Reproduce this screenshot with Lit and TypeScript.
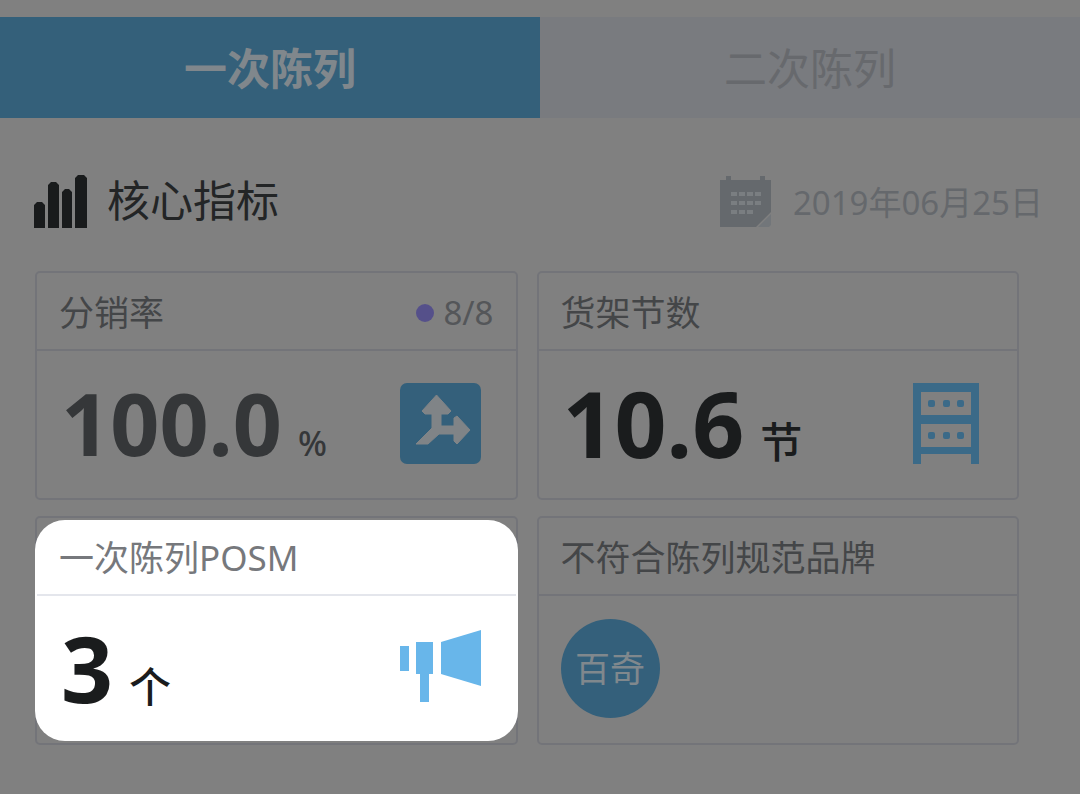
import { LitElement, html, svg, css, TemplateResult } from "lit";
import { customElement, property, state } from "lit/decorators.js";
import { classMap } from "lit/directives/class-map.js";

const distributionIcon = html`<svg viewBox="0 0 81 81" aria-hidden="true">
  <rect width="81" height="81" rx="7" fill="#34607b" />
  <path
    d="M36.500 12L51 28L48 31H41V43H54V35L57 33L70 47L57 61L54 58V51H39L28 61H16L32 45V31H25L22 28Z"
    fill="#808487"
    stroke="#808487"
    stroke-linejoin="round"
  />
</svg>`;

const dots = (y: number) =>
  [27, 42, 56].map((x) => svg`<rect x=${x} y=${y} width="7" height="7" rx="2" />`);

const shelfIcon = html`<svg viewBox="0 0 81 81" aria-hidden="true">
  <g fill="#3b6a88">
    <path
      fill-rule="evenodd"
      d="M12 0H78V81H70V71H20V81H12ZM20 9V32H70V9ZM20 41V64H70V41Z"
    />
    ${dots(17)}${dots(49)}
  </g>
</svg>`;

const megaphoneIcon = html`<svg viewBox="0 0 81 81" aria-hidden="true">
  <g fill="#68b6ea">
    <rect y="18" width="9" height="25" />
    <path d="M16 14H33V46H29V74H20V46H16Z" />
    <path d="M41 14L81 2V58L41 46Z" />
  </g>
</svg>`;

@customElement("metric-card")
class MetricCard extends LitElement {
  @property() heading = "";
  @property() ratio = "";
  @property({ type: Boolean, reflect: true }) spotlight = false;

  static styles = css`
    :host {
      display: flex;
      flex-direction: column;
      box-sizing: border-box;
      position: relative;
      z-index: 0;
      border: 2px solid #737479;
      border-radius: 5px;
      color: #444648;
    }
    :host([spotlight]) {
      color: #76787c;
    }
    :host([spotlight])::before {
      content: "";
      position: absolute;
      z-index: -1;
      inset: 2px -2px;
      border-radius: 30px;
      background: #fff;
    }
    .head {
      display: flex;
      align-items: center;
      justify-content: space-between;
      box-sizing: border-box;
      height: 78px;
      padding: 4px 22px 0;
      border-bottom: 2px solid #737479;
    }
    :host([spotlight]) .head {
      border-color: #e4e6ec;
    }
    h2 {
      margin: 0;
      font-size: 35px;
      font-weight: 400;
      line-height: 48px;
    }
    .ratio {
      display: flex;
      align-items: center;
      gap: 9px;
      font-size: 33px;
      line-height: 48px;
      color: #545659;
    }
    .dot {
      width: 18px;
      height: 18px;
      border-radius: 50%;
      background: #55508a;
    }
    .body {
      display: flex;
      align-items: center;
      justify-content: space-between;
      box-sizing: border-box;
      height: 147px;
      padding: 0 35px 2px 22px;
    }
  `;

  render() {
    return html`
      <div class="head">
        <h2>${this.heading}</h2>
        ${this.ratio
          ? html`<span class="ratio"><span class="dot"></span>${this.ratio}</span>`
          : ""}
      </div>
      <div class="body"><slot></slot><slot name="icon"></slot></div>
    `;
  }
}

@customElement("app-root")
class AppRoot extends LitElement {
  @state() private active = 0;

  static styles = css`
    :host {
      display: block;
      box-sizing: border-box;
      min-height: 100vh;
      padding-top: 17px;
      background: #808080;
      font-family: "Noto Sans", "Noto Sans CJK SC", sans-serif;
    }
    .tabs {
      display: grid;
      grid-template-columns: 1fr 1fr;
    }
    .tab {
      height: 101px;
      border: 0;
      padding: 0 0 3px;
      font: inherit;
      font-size: 43px;
      color: #67696d;
      background: #797b7f;
    }
    .tab.active {
      font-weight: 700;
      color: #80878c;
      background: #34607a;
    }
    .title-row {
      display: flex;
      align-items: center;
      justify-content: space-between;
      padding: 53px 37px 40px 34px;
    }
    .title,
    .date {
      display: flex;
      align-items: center;
    }
    .title {
      gap: 20px;
      color: #232526;
    }
    h1 {
      margin: 0;
      font-size: 43px;
      font-weight: 400;
      line-height: 60px;
    }
    .date {
      gap: 21px;
      font-size: 33px;
      line-height: 56px;
      color: #65686c;
    }
    time {
      padding-top: 4px;
    }
    .small-icon {
      width: 53px;
      height: 53px;
    }
    .cards {
      display: grid;
      grid-template-columns: 1fr 1fr;
      gap: 16px 19px;
      padding: 0 61px 49px 35px;
    }
    .value {
      display: flex;
      align-items: baseline;
      gap: 16px;
      padding: 18px 0 0 2px;
      font-size: 91px;
      font-weight: 700;
      line-height: 120px;
      color: #1a1c1d;
    }
    .value.muted {
      font-size: 86px;
      color: #353739;
    }
    .unit {
      font-size: 42px;
      font-weight: 500;
    }
    .muted .unit {
      font-size: 34px;
    }
    .icon {
      display: flex;
      width: 81px;
      height: 81px;
    }
    .icon svg {
      width: 100%;
      height: 100%;
    }
    .brand {
      width: 99px;
      height: 99px;
      border-radius: 50%;
      background: #34607b;
      color: #80888d;
      font-size: 35px;
      line-height: 99px;
      text-align: center;
    }
  `;

  private value(amount: string, unit: string, icon: TemplateResult, muted = false) {
    return html`
      <div class=${classMap({ value: true, muted })}>
        <span>${amount}</span><span class="unit">${unit}</span>
      </div>
      <div class="icon" slot="icon">${icon}</div>
    `;
  }

  render() {
    return html`
      <div class="tabs" role="tablist">
        ${["一次陈列", "二次陈列"].map(
          (label, i) => html`<button
            role="tab"
            aria-selected=${i === this.active}
            class=${classMap({ tab: true, active: i === this.active })}
            @click=${() => (this.active = i)}
          >
            ${label}
          </button>`
        )}
      </div>
      <div class="title-row">
        <div class="title">
          <svg class="small-icon" viewBox="0 0 53 53" fill="#191b1c" aria-hidden="true">
            <path
              d="M0 53V30L3 27H8L11 30V53ZM14 53V10L17 7H22L25 10V53ZM28 53V17L31 14H35L38 17V53ZM41 53V3L44 0H50L53 3V53Z"
            />
          </svg>
          <h1>核心指标</h1>
        </div>
        <div class="date">
          <svg class="small-icon" viewBox="0 0 53 53" aria-hidden="true">
            <path
              d="M1 5H7V1H12V5H41V1H46V5H52V37L37 52H1Z"
              fill="#65696d"
            />
            <path d="M52 39V50L50 52H39Z" fill="#72767a" />
            <g stroke="#7a7e81" stroke-width="4" stroke-dasharray="6 2">
              <path d="M12 19H42M12 28H42M12 37H34" />
            </g>
          </svg>
          <time datetime="2019-06-25">2019年06月25日</time>
        </div>
      </div>
      <div class="cards">
        <metric-card heading="分销率" ratio="8/8">
          ${this.value("100.0", "%", distributionIcon, true)}
        </metric-card>
        <metric-card heading="货架节数">
          ${this.value("10.6", "节", shelfIcon)}
        </metric-card>
        <metric-card heading="一次陈列POSM" spotlight>
          ${this.value("3", "个", megaphoneIcon)}
        </metric-card>
        <metric-card heading="不符合陈列规范品牌">
          <div class="brand">百奇</div>
        </metric-card>
      </div>
    `;
  }
}
